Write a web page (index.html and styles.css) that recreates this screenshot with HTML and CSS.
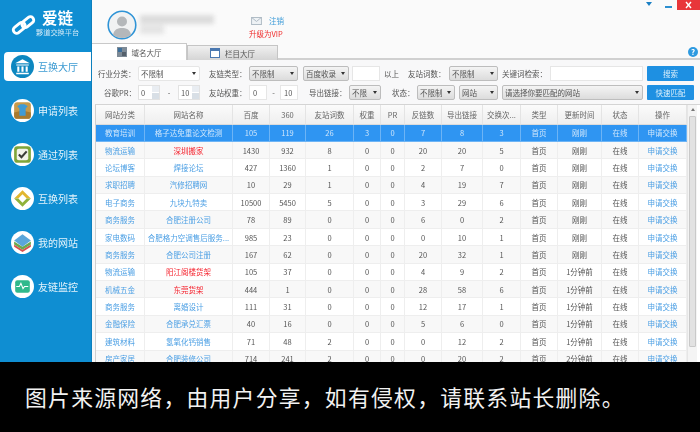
FILE: index.html
```html
<!DOCTYPE html>
<html lang="zh-CN">
<head>
<meta charset="utf-8">
<title>爱链</title>
<link rel="stylesheet" href="styles.css">
</head>
<body>
<div class="app">
  <aside class="side">
    <div class="brand">
      <svg class="logo" viewBox="0 0 26 21"><g fill="none" stroke="#fff" stroke-width="3"><rect x="1.500" y="10" width="14" height="7" rx="3.500" transform="rotate(-38 8.500 13.500)"/><rect x="10.500" y="4" width="14" height="7" rx="3.500" transform="rotate(-38 17.500 7.500)"/></g></svg>
      <div class="brand-text"><div class="brand-name">爱链</div><div class="brand-sub">夥道交换平台</div></div>
    </div>
    <nav class="nav">
      <a class="nav-item active"><span class="ico ico-blue"><svg viewBox="0 0 22 22"><circle cx="11" cy="11" r="11" fill="#0d87c0"/><path d="M11 4l7 4H4z" fill="#fff"/><path d="M5 9h12v1H5zM6 11h2v5H6zM10 11h2v5h-2zM14 11h2v5h-2zM5 17h12v1.400H5z" fill="#fff"/></svg></span><span>互换大厅</span></a>
      <a class="nav-item"><span class="ico"><svg viewBox="0 0 22 22"><circle cx="11" cy="11" r="11" fill="#fff"/><rect x="3" y="3" width="16" height="16" rx="3" fill="#c79a4a"/><path d="M3 13l8-2 8 2v3a3 3 0 0 1-3 3H6a3 3 0 0 1-3-3z" fill="#a77a30"/><path d="M6 7l3-2h4l3 2-2 2v7H8V9z" fill="#3f9bd6"/></svg></span><span>申请列表</span></a>
      <a class="nav-item"><span class="ico"><svg viewBox="0 0 22 22"><circle cx="11" cy="11" r="11" fill="#fff"/><rect x="3" y="3" width="16" height="16" rx="3" fill="#7ea53a"/><rect x="5.500" y="5.500" width="11" height="11" rx="2" fill="#f2f3ea"/><path d="M7.500 11l2.500 2.500 5-5.500" fill="none" stroke="#3b3d38" stroke-width="2"/></svg></span><span>通过列表</span></a>
      <a class="nav-item"><span class="ico"><svg viewBox="0 0 22 22"><circle cx="11" cy="11" r="11" fill="#fff"/><path d="M11 3l8 8-4 0-4-4-4 4H3z" fill="#e2b62f"/><path d="M11 19l-8-8h4l4 4 4-4h4z" fill="#8fb23c"/><path d="M11 8l3 3-3 3-3-3z" fill="#fff"/></svg></span><span>互换列表</span></a>
      <a class="nav-item"><span class="ico"><svg viewBox="0 0 22 22"><circle cx="11" cy="11" r="11" fill="#fff"/><path d="M3 13l8 5 8-5v2l-8 5-8-5z" fill="#d9504f"/><path d="M3 10l8 5 8-5v3l-8 5-8-5z" fill="#6aa84f"/><path d="M11 3l8 6-8 6-8-6z" fill="#5aa6da"/></svg></span><span>我的网站</span></a>
      <a class="nav-item"><span class="ico"><svg viewBox="0 0 22 22"><circle cx="11" cy="11" r="11" fill="#fff"/><rect x="4" y="5" width="14" height="12" rx="2" fill="#2fb98c"/><path d="M5 11h3l1.500-3 2 5 1.500-2h3.500" fill="none" stroke="#fff" stroke-width="1"/></svg></span><span>友链监控</span></a>
    </nav>
  </aside>
  <main class="main">
    <header class="top">
      <div class="user">
        <svg class="avatar" viewBox="0 0 30 30"><circle cx="15" cy="15" r="13.800" fill="#f1f2f3" stroke="#2e93d6" stroke-width="1.600"/><circle cx="15" cy="11.500" r="5" fill="#b4b7ba"/><path d="M6 25c1-6 5-7 9-7s8 1 9 7c-5 4-13 4-18 0z" fill="#b4b7ba"/></svg>
        <div class="blur-name"><span class="blur-a"></span><span class="blur-b"></span></div>
      </div>
      <div class="account">
        <div class="logout"><svg class="mail" viewBox="0 0 12 9"><rect x=".5" y=".5" width="11" height="8" fill="#eef2f5" stroke="#a9b6c0"/><path d="M.5.500l5.500 4.500 5.500-4.500" fill="none" stroke="#a9b6c0"/></svg><span>注销</span></div>
        <div class="vip">升级为VIP</div>
      </div>
      <div class="win">
        <span class="win-menu"></span><span class="win-min"></span><span class="win-close"><svg viewBox="0 0 23 10"><path d="M9 2l5 6M14 2l-5 6" stroke="#fff" stroke-width="1.400"/></svg></span>
      </div>
      <span class="help">?</span>
    </header>
    <div class="tabs">
      <div class="tab tab-on"><svg class="tab-ico" viewBox="0 0 10 10"><rect width="10" height="10" fill="#7d8a96"/><rect x="1" y="1" width="4" height="4" fill="#3d6f9a"/><rect x="5" y="5" width="4" height="4" fill="#54606b"/></svg><span>域名大厅</span></div>
      <div class="tab tab-off"><svg class="tab-ico" viewBox="0 0 10 10"><rect x=".5" y=".5" width="9" height="9" fill="#fff" stroke="#4a78b0"/><rect x="1" y="1" width="8" height="2" fill="#4a78b0"/></svg><span>栏目大厅</span></div>
    </div>
    <div class="filters">
      <div class="frow">
        <label class="lb w35 ml6">行业分类：</label>
        <span class="sel white w62 ml5">不限制</span>
        <label class="lb w35 ml9">友链类型：</label>
        <span class="sel w49 ml5">不限制</span>
        <span class="sel w46 ml5">百度收录</span>
        <span class="inp w28 ml3"></span>
        <label class="lb w16 ml4">以上</label>
        <label class="lb w36 ml8">友站词数：</label>
        <span class="sel w49 ml5">不限制</span>
        <label class="lb w44 ml4">关键词检索：</label>
        <span class="inp w93 ml4"></span>
        <span class="btn ml4">搜索</span>
      </div>
      <div class="frow">
        <label class="lb w29 ml12">谷歌PR：</label>
        <span class="spin w22 ml5">0<i class="arrows"></i></span>
        <span class="dash w18">-</span>
        <span class="spin w22">10<i class="arrows"></i></span>
        <label class="lb w35 ml9">友站权重：</label>
        <span class="inp txt w18 ml5">0</span>
        <span class="dash w13">-</span>
        <span class="inp txt w18">10</span>
        <label class="lb w36 ml11">导出链接：</label>
        <span class="sel w32 ml4">不限</span>
        <label class="lb w20 ml11">状态：</label>
        <span class="sel w38 ml5">不限制</span>
        <span class="sel w39 ml4">网站</span>
        <span class="sel w141 ml4">请选择你要匹配的网站</span>
        <span class="btn ml4">快速匹配</span>
      </div>
    </div>
    <section class="grid-wrap">
      <div class="grid">
        <div class="row head"><span>网站分类</span><span>网站名称</span><span>百度</span><span>360</span><span>友站词数</span><span>权重</span><span>PR</span><span>反链数</span><span>导出链接</span><span>交换次...</span><span>类型</span><span>更新时间</span><span>状态</span><span>操作</span></div>
        <div class="row sel-row"><span>教育培训</span><span>格子达免重论文检测</span><span>105</span><span>119</span><span>26</span><span>3</span><span>0</span><span>7</span><span>8</span><span>3</span><span>首页</span><span>刚刚</span><span>在线</span><span>申请交换</span></div>
        <div class="row alt"><span class="lk">物流运输</span><span class="red">深圳搬家</span><span>1430</span><span>932</span><span>8</span><span>0</span><span>0</span><span>20</span><span>20</span><span>5</span><span>首页</span><span>刚刚</span><span>在线</span><span class="lk">申请交换</span></div>
        <div class="row"><span class="lk">论坛博客</span><span class="lk">焊接论坛</span><span>427</span><span>1360</span><span>1</span><span>0</span><span>0</span><span>2</span><span>7</span><span>0</span><span>首页</span><span>刚刚</span><span>在线</span><span class="lk">申请交换</span></div>
        <div class="row alt"><span class="lk">求职招聘</span><span class="lk">汽修招聘网</span><span>10</span><span>29</span><span>1</span><span>0</span><span>0</span><span>4</span><span>19</span><span>7</span><span>首页</span><span>刚刚</span><span>在线</span><span class="lk">申请交换</span></div>
        <div class="row"><span class="lk">电子商务</span><span class="lk">九块九特卖</span><span>10500</span><span>5450</span><span>5</span><span>0</span><span>0</span><span>3</span><span>29</span><span>6</span><span>首页</span><span>刚刚</span><span>在线</span><span class="lk">申请交换</span></div>
        <div class="row alt"><span class="lk">商务服务</span><span class="lk">合肥注册公司</span><span>78</span><span>89</span><span>0</span><span>0</span><span>0</span><span>6</span><span>0</span><span>2</span><span>首页</span><span>刚刚</span><span>在线</span><span class="lk">申请交换</span></div>
        <div class="row"><span class="lk">家电数码</span><span class="lk">合肥格力空调售后服务...</span><span>985</span><span>23</span><span>0</span><span>0</span><span>0</span><span>0</span><span>10</span><span>1</span><span>首页</span><span>刚刚</span><span>在线</span><span class="lk">申请交换</span></div>
        <div class="row alt"><span class="lk">商务服务</span><span class="lk">合肥公司注册</span><span>167</span><span>62</span><span>0</span><span>0</span><span>0</span><span>20</span><span>32</span><span>1</span><span>首页</span><span>刚刚</span><span>在线</span><span class="lk">申请交换</span></div>
        <div class="row"><span class="lk">物流运输</span><span class="red">阳江阁楼货架</span><span>105</span><span>37</span><span>0</span><span>0</span><span>0</span><span>4</span><span>9</span><span>2</span><span>首页</span><span>1分钟前</span><span>在线</span><span class="lk">申请交换</span></div>
        <div class="row alt"><span class="lk">机械五金</span><span class="red">东莞货架</span><span>444</span><span>1</span><span>0</span><span>0</span><span>0</span><span>28</span><span>58</span><span>6</span><span>首页</span><span>1分钟前</span><span>在线</span><span class="lk">申请交换</span></div>
        <div class="row"><span class="lk">商务服务</span><span class="lk">离婚设计</span><span>111</span><span>31</span><span>0</span><span>0</span><span>0</span><span>12</span><span>17</span><span>1</span><span>首页</span><span>1分钟前</span><span>在线</span><span class="lk">申请交换</span></div>
        <div class="row alt"><span class="lk">金融保险</span><span class="lk">合肥承兑汇票</span><span>40</span><span>16</span><span>0</span><span>0</span><span>0</span><span>5</span><span>6</span><span>0</span><span>首页</span><span>1分钟前</span><span>在线</span><span class="lk">申请交换</span></div>
        <div class="row"><span class="lk">建筑材料</span><span class="lk">氢氧化钙销售</span><span>71</span><span>48</span><span>2</span><span>0</span><span>0</span><span>0</span><span>12</span><span>2</span><span>首页</span><span>1分钟前</span><span>在线</span><span class="lk">申请交换</span></div>
        <div class="row alt"><span class="lk">房产家居</span><span class="lk">合肥装修公司</span><span>714</span><span>241</span><span>2</span><span>0</span><span>0</span><span>0</span><span>20</span><span>2</span><span>首页</span><span>2分钟前</span><span>在线</span><span class="lk">申请交换</span></div>
      </div>
      <div class="scrollbar"><span class="sb-up"></span><span class="sb-thumb"></span></div>
    </section>
  </main>
</div>
<div class="notice">图片来源网络，由用户分享，如有侵权，请联系站长删除。</div>
</body>
</html>
```
FILE: styles.css
```css
* { box-sizing: border-box; }
html, body { margin: 0; height: 100%; overflow: hidden; background: #000; }
body { position: relative; width: 700px; height: 432px; font-family: "Noto Sans CJK SC", "Liberation Sans", sans-serif; }
.app { display: flex; width: 700px; height: 432px; filter: blur(.6px); }

.side { width: 92px; flex: none; background: #0f8ed2; color: #fff; border-right: 1px solid #0c7fbd; padding-top: 9px; }
.brand { display: flex; align-items: flex-start; padding-left: 11px; height: 43px; }
.logo { width: 25px; height: 20px; margin-top: 6px; flex: none; }
.brand-text { text-align: center; }
.brand-name { font-size: 15.500px; font-weight: 700; line-height: 17px; letter-spacing: 0; }
.brand-sub { font-size: 7.200px; line-height: 9px; margin-top: 1.500px; color: #cfe8f6; white-space: nowrap; }
.nav { display: flex; flex-direction: column; gap: 15px; margin-left: 4px; }
.nav-item { display: flex; align-items: center; height: 29px; padding-left: 7px; font-size: 10px; color: #e4f3fb; }
.nav-item.active { background: #fff; border-radius: 4px 0 0 4px; color: #3b9ad2; }
.ico { width: 23px; height: 23px; margin-right: 4px; flex: none; }
.ico svg { display: block; width: 23px; height: 23px; }

.main { flex: 1; display: flex; flex-direction: column; background: #f7f8f9; min-width: 0; }
.top { position: relative; height: 43px; flex: none; display: flex; background: #fafafa; }
.user { display: flex; align-items: center; padding-left: 15px; width: 157px; height: 43px; padding-top: 9px; }
.avatar { width: 30px; height: 30px; flex: none; margin-top: -2px; }
.blur-name { display: flex; flex-direction: column; gap: 1px; margin-left: 3px; filter: blur(2px); margin-top: -3px; }
.blur-a { display: block; width: 74px; height: 9px; background: #dcdcdc; }
.blur-b { display: block; width: 24px; height: 9px; background: #e4e4e4; }
.account { padding-top: 15px; font-size: 7.500px; line-height: 12px; width: 40px; }
.logout { display: flex; align-items: center; color: #3c9bd8; padding-left: 2px; height: 11px; }
.mail { width: 11px; height: 8px; margin-right: 7px; flex: none; }
.vip { color: #f02c2c; margin-top: 2px; white-space: nowrap; }
.win { position: absolute; top: 0; right: 0; display: flex; align-items: flex-start; }
.win-menu { width: 0; height: 0; border-left: 3.500px solid transparent; border-right: 3.500px solid transparent; border-top: 4px solid #1a7fc4; margin: 2px 13px 0 0; }
.win-min { width: 7px; height: 2px; background: #2c8fd0; margin: 6px 5px 0 0; }
.win-close { display: block; width: 23px; height: 10px; background: #e8363a; }
.win-close svg { display: block; width: 23px; height: 10px; }
.help { position: absolute; right: 2px; top: 47px; width: 10px; height: 10px; z-index: 2; border-radius: 50%; background: #2e9ae0; color: #fff; font-size: 8px; line-height: 10px; text-align: center; font-weight: 700; }

.tabs { display: flex; height: 17px; flex: none; background: #fafafa; border-bottom: 2px solid #d0d0d0; }
.tab { display: flex; align-items: center; justify-content: center; font-size: 7.500px; color: #555; }
.tab-ico { width: 10px; height: 10px; margin-right: 5px; }
.tab-on { width: 95px; height: 17px; background: #fff; border-top: 1px solid #c9c9c9; border-right: 1px solid #c9c9c9; position: relative; z-index: 1; }
.tab-off { width: 91px; height: 15px; margin-top: 2px; background: linear-gradient(#f0f0f0, #d5d5d5); border: 1px solid #c5c5c5; border-bottom: 0; }

.filters { flex: none; height: 44px; padding-top: 6px; background: #f8f8f9; }
.frow { display: flex; align-items: center; height: 15px; margin-bottom: 4px; font-size: 7.500px; color: #555; }
.lb { display: block; white-space: nowrap; flex: none; }
.sel, .inp, .spin { display: flex; align-items: center; flex: none; height: 15px; padding-left: 2px; white-space: nowrap; overflow: hidden; }
.sel { position: relative; background: linear-gradient(#f4f4f4, #dcdcdc); border: 1px solid #bdbdbd; border-radius: 2px; }
.sel.white { background: #fff; border-color: #e6e6e6; }
.sel::after { content: ""; position: absolute; right: 3px; top: 5px; border-left: 2.500px solid transparent; border-right: 2.500px solid transparent; border-top: 3px solid #333; }
.inp { background: #fff; border: 1px solid #e6e6e6; }
.txt { padding-left: 3px; }
.spin { background: #fff; border: 1px solid #e2e2e2; justify-content: space-between; padding-right: 0; }
.arrows { display: block; width: 7px; height: 13px; background: linear-gradient(#e9edf2 0 47%, #fff 47% 53%, #d8dfe6 53%); }
.dash { display: block; flex: none; text-align: center; }
.btn { display: flex; flex: none; width: 47px; height: 15px; align-items: center; justify-content: center; background: #1e90e2; color: #d8eefb; border-radius: 1px; }
.ml3 { margin-left: 3px; } .ml4 { margin-left: 4px; } .ml5 { margin-left: 5px; } .ml6 { margin-left: 6px; } .ml8 { margin-left: 8px; } .ml9 { margin-left: 9px; } .ml11 { margin-left: 11px; } .ml12 { margin-left: 12px; }
.w13 { width: 13px; } .w16 { width: 16px; } .w18 { width: 18px; } .w20 { width: 20px; } .w22 { width: 22px; } .w28 { width: 28px; } .w29 { width: 29px; } .w32 { width: 32px; } .w35 { width: 35px; } .w36 { width: 36px; } .w38 { width: 38px; } .w39 { width: 39px; } .w44 { width: 44px; } .w46 { width: 46px; } .w49 { width: 49px; } .w62 { width: 62px; } .w93 { width: 93px; } .w141 { width: 141px; }

.grid-wrap { flex: 1; display: flex; margin-left: 3px; border-top: 1px solid #d4d4d4; border-left: 1px solid #cfcfcf; background: #fff; min-height: 0; overflow: hidden; }
.grid { width: 591px; flex: none; }
.row { display: grid; grid-template-columns: 49px 88px 37px 36px 48px 27px 24px 37px 41px 38px 37px 44px 37px 48px; height: 17.400px; font-size: 7.500px; color: #555; background: #fff; }
.row > span { display: flex; align-items: center; justify-content: center; white-space: nowrap; overflow: hidden; border-right: 1px solid #eeeeee; border-bottom: 1px solid #eeeeee; }
.row.alt { background: #f8f8f8; }
.row.head { height: 19.500px; background: linear-gradient(#fbfbfb, #eeeeee); color: #666; }
.row.head > span { border-right-color: #e4e4e4; border-bottom-color: #dcdcdc; }
.row.sel-row { background: #2f95f2; color: #cfe6fb; }
.row.sel-row > span { border-color: #6db4f5; }
.lk { color: #4b9fe4; }
.red { color: #f5222d; }
.scrollbar { flex: 1; display: flex; flex-direction: column; align-items: center; background: #f4f4f4; padding-top: 3px; margin-right: 3px; border-left: 1px solid #e6e6e6; }
.sb-up { width: 0; height: 0; border-left: 2px solid transparent; border-right: 2px solid transparent; border-bottom: 3px solid #777; }
.sb-thumb { width: 7px; height: 231px; margin-top: 5px; background: #e2e2e2; border: 1px solid #c9c9c9; border-radius: 1px; }

.notice { position: absolute; left: 0; right: 0; bottom: 0; height: 70px; background: #000; color: #f2f2f2; font-size: 21.800px; line-height: 70px; padding-left: 25px; letter-spacing: 1.270px; white-space: nowrap; }
```
